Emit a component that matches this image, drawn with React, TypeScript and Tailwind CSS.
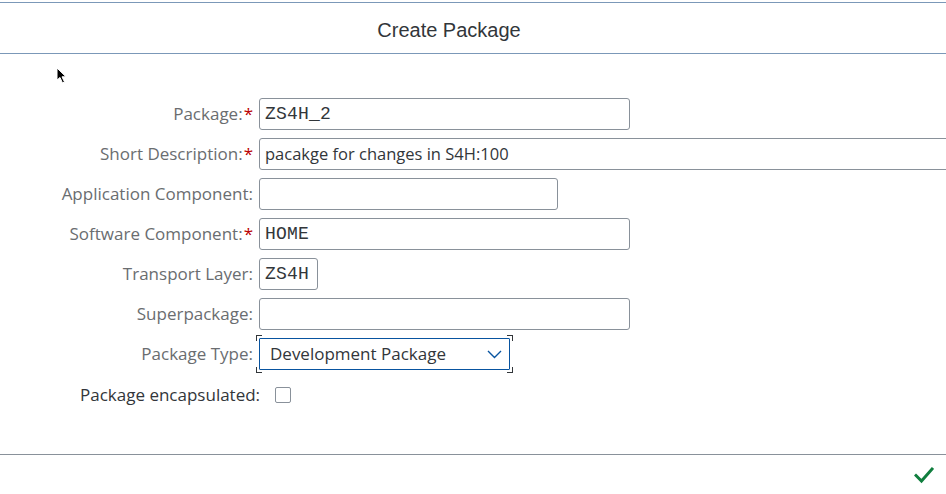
const font = { fontFamily: '"Open Sans", "Liberation Sans", Arial, sans-serif' };
const titleFont = { fontFamily: '"Liberation Sans", Arial, sans-serif' };
const monoFont = { fontFamily: '"Liberation Mono", "DejaVu Sans Mono", monospace' };

type Row = { label: string; required?: boolean; value: string; width: string; mono?: boolean };

const rows: Row[] = [
  { label: "Package:", required: true, value: "ZS4H_2", width: "w-[371px]", mono: true },
  { label: "Short Description:", required: true, value: "pacakge for changes in S4H:100", width: "w-[720px]" },
  { label: "Application Component:", value: "", width: "w-[299px]" },
  { label: "Software Component:", required: true, value: "HOME", width: "w-[371px]", mono: true },
  { label: "Transport Layer:", value: "ZS4H", width: "w-[59px]", mono: true },
  { label: "Superpackage:", value: "", width: "w-[371px]" },
];

function Label({ text, required }: { text: string; required?: boolean }) {
  return (
    <div className="flex h-8 items-center justify-end whitespace-nowrap pr-[6px] text-[17px] text-[#6a6d70]">
      {text}
      {required && <span className="ml-[1px] text-[#bb0000]">*</span>}
    </div>
  );
}

export default function App() {
  return (
    <div style={font} className="relative h-[494px] w-[946px] overflow-hidden bg-white pt-[2px] text-[#32363a]">
      <header
        style={titleFont}
        className="flex h-[52px] items-center justify-center border-y border-[#7b98b8] pr-[48px] pt-[4px] text-[20px]"
      >
        Create Package
      </header>

      <main className="h-[400px] pt-[44px]">
        <div className="grid grid-cols-[259px_1fr] gap-y-2">
          {rows.map((row) => (
            <div key={row.label} className="contents">
              <Label text={row.label} required={row.required} />
              <div
                className={`flex h-8 items-center overflow-hidden whitespace-nowrap rounded-[3px] border border-[#89919a] bg-white px-[5px] text-[#32363a] ${row.width}`}
              >
                {row.mono ? (
                  <span style={monoFont} className="text-[18px] tracking-[0.2px]">
                    {row.value}
                  </span>
                ) : (
                  <span className="text-[16.5px]">{row.value}</span>
                )}
              </div>
            </div>
          ))}

          <Label text="Package Type:" />
          <div className="relative w-[251px]">
            <div className="flex h-8 items-center justify-between rounded-[1px] border border-[#0854a0] pl-[10px] pr-[7px] text-[17px]">
              Development Package
              <svg width="15" height="9" viewBox="0 0 15 9" fill="none">
                <path d="M1 1 L7.5 7.5 L14 1" stroke="#0854a0" strokeWidth="1.4" />
              </svg>
            </div>
            <span className="absolute -left-[3px] -top-[3px] h-[6px] w-[6px] border-l border-t border-[#32363a]" />
            <span className="absolute -right-[3px] -top-[3px] h-[6px] w-[6px] border-r border-t border-[#32363a]" />
            <span className="absolute -bottom-[3px] -left-[3px] h-[6px] w-[6px] border-b border-l border-[#32363a]" />
            <span className="absolute -bottom-[3px] -right-[3px] h-[6px] w-[6px] border-b border-r border-[#32363a]" />
          </div>
        </div>

        <div className="mt-[12px] flex items-center pl-[80px] text-[17px] text-[#32363a]">
          Package encapsulated:
          <span className="ml-[15px] h-4 w-4 rounded-[2px] border border-[#89919a] bg-white" />
        </div>
      </main>

      <footer className="flex h-[40px] items-center justify-end border-t border-[#89919a] pr-[12px]">
        <svg width="20" height="18" viewBox="0 0 20 18" fill="none">
          <path d="M2 9.5 L7.5 15 L18 3" stroke="#107e3e" strokeWidth="3" strokeLinecap="square" />
        </svg>
      </footer>

      <svg className="absolute left-[56px] top-[67px]" width="12" height="18" viewBox="0 0 12 18">
        <path d="M1 1 L1 13 L4 10.5 L6.5 16 L8.5 15 L6 9.8 L10 9.8 Z" fill="#000" stroke="#fff" strokeWidth="1" />
      </svg>
    </div>
  );
}
